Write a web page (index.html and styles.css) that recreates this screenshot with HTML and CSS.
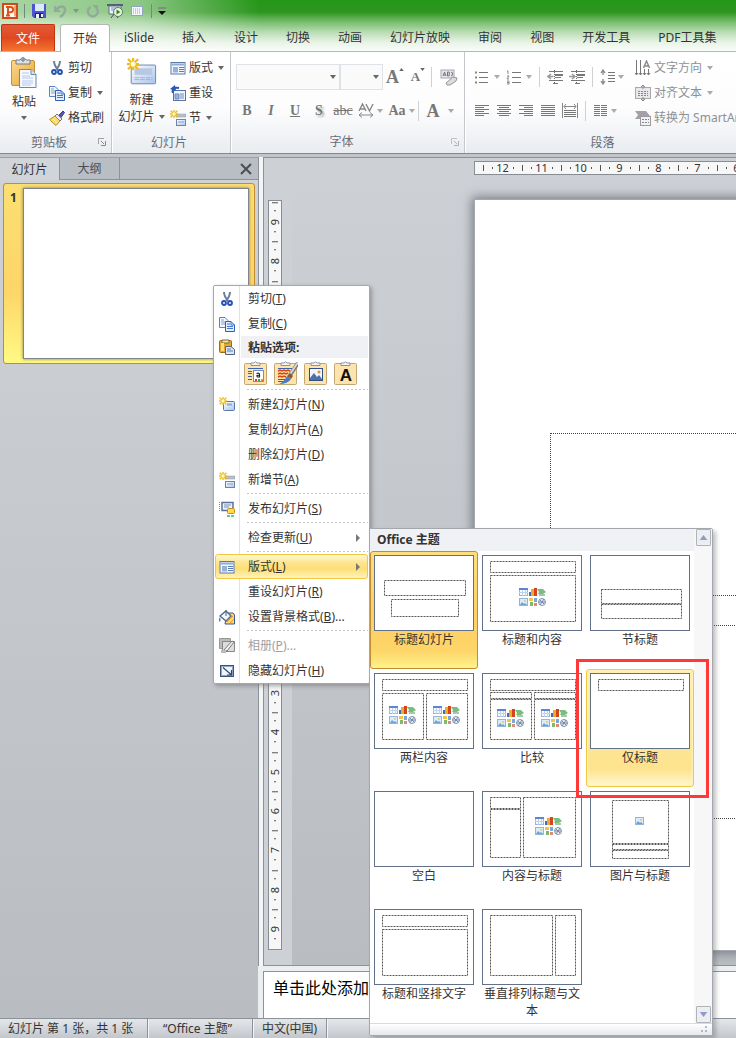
FILE: index.html
```html
<!DOCTYPE html>
<html lang="zh-CN">
<head>
<meta charset="utf-8">
<title>演示文稿</title>
<link rel="stylesheet" href="styles.css">
</head>
<body>
<svg class="sprite" aria-hidden="true">
  <defs>
    <linearGradient id="gBlue" x1="0" y1="0" x2="1" y2="1"><stop offset="0" stop-color="#fff"/><stop offset="1" stop-color="#a9c4ec"/></linearGradient>
    <linearGradient id="gPaste" x1="0" y1="0" x2="1" y2="1"><stop offset="0" stop-color="#ffd98a"/><stop offset="1" stop-color="#e0a63c"/></linearGradient>
  </defs>
  <symbol id="caret" viewBox="0 0 6 4"><path d="M0 0h6L3 4z" fill="currentColor"/></symbol>
  <symbol id="logo" viewBox="0 0 16 16"><rect x="1" y="1" width="14" height="14" fill="#fff8f2" stroke="#d0491b" stroke-width="2"/><path d="M12 3l2-1v12l-2-1z" fill="#f3a36e"/><path d="M6 13V4h2.500a2.500 2.500 0 0 1 0 5.200H6M4 12.500h4M4 4h2" fill="none" stroke="#d9541e" stroke-width="2"/></symbol>
  <symbol id="save" viewBox="0 0 16 16"><path d="M1 1h14v14H3l-2-2z" fill="#4a55cc"/><path d="M4 1h9v7H4z" fill="#dce9fa"/><path d="M4 10h8v5H4z" fill="#20275e"/><path d="M5 11h3v4H5zM10 11h2v3h-2z" fill="#eef"/></symbol>
  <symbol id="undo" viewBox="0 0 16 16"><path d="M4 6c3-4 8-3 8 1 0 3-2 5-5 7" fill="none" stroke="#93a99b" stroke-width="2.500"/><path d="M1 2v7h7z" fill="#93a99b"/></symbol>
  <symbol id="redo" viewBox="0 0 16 16"><path d="M5.500 4a5 5 0 1 0 6 1" fill="none" stroke="#93a99b" stroke-width="2.500"/><path d="M7 2h6v6z" fill="#93a99b"/></symbol>
  <symbol id="show" viewBox="0 0 16 16"><path d="M0 1h16v2H0z" fill="#4e6277"/><path d="M2 3h12v8H2z" fill="#edf4f8" stroke="#5c7185"/><path d="M4 5h6M4 7h5" stroke="#6f93c6"/><path d="M7 11l-3 4M8 11l3 4" stroke="#445"/><circle cx="11" cy="9" r="4.500" fill="#e6f5dd" stroke="#66795c"/><path d="M9.500 6.500v5l4-2.500z" fill="#2c8b28"/></symbol>
  <symbol id="dots" viewBox="0 0 16 16"><rect x="2" y="3" width="12" height="10" fill="#f4f7fc"/><rect x="2.500" y="3.500" width="11" height="9" fill="none" stroke="#2f5184" stroke-dasharray="1 1"/><path d="M4 6h8M4 8h8M4 10h8" stroke="#8ea3c8" stroke-dasharray="1 1"/></symbol>
  <symbol id="more" viewBox="0 0 8 8"><path d="M0 1h8" stroke="#fff" stroke-width="2"/><path d="M0 1h8" stroke="#111"/><path d="M0 4h8L4 8z" fill="#111"/></symbol>
  <symbol id="bigpaste" viewBox="0 0 30 32"><rect x="2.500" y="3.500" width="23" height="25" rx="1.500" fill="url(#gPaste)" stroke="#c98f31"/><path d="M7 3h4q3-5 6 0h4v4H7z" fill="#dde1e5" stroke="#717b86"/><circle cx="14" cy="3" r="1.200" fill="#fff" stroke="#56606b"/><path d="M10.500 12.500H22l5 5v13H10.500z" fill="#f5f9ff" stroke="#6d86aa"/><path d="M22 12.500v5h5" fill="#d5e3f6" stroke="#6d86aa"/><path d="M13 16h7M13 19h8M13 21h11M13 24h11M13 26h11M13 28h9" stroke="#b6c9e6"/></symbol>
  <symbol id="cut" viewBox="0 0 16 16"><path d="M5 1q0 4 4 9M11 1q0 4-4 9" fill="none" stroke="#6c7f9a" stroke-width="2"/><circle cx="5" cy="12" r="2" fill="#dbe8fb" stroke="#2650b4" stroke-width="1.800"/><circle cx="11" cy="12" r="2" fill="#dbe8fb" stroke="#2650b4" stroke-width="1.800"/></symbol>
  <symbol id="copy" viewBox="0 0 16 16"><path d="M.5 1.500H6l3 3v7H.5z" fill="#f2f7ff" stroke="#5a82bf"/><path d="M2 4h3M2 6h5M2 8h5" stroke="#7fa2d8"/><path d="M6.500 5.500H12l3.500 3.500v6.500h-9z" fill="#e4eeff" stroke="#2f5fb0"/><path d="M12 5.500V9h3.500M8 8h3M8 10.500h6M8 12.500h6" fill="none" stroke="#4377cf"/></symbol>
  <symbol id="brush" viewBox="0 0 16 16"><path d="M10 5l4-4 1.500 1.500-3.500 5z" fill="#5a55a8" stroke="#3f3c86"/><path d="M8 4l5 5-2 2-5-5z" fill="#e9ecf2" stroke="#777"/><path d="M6 6l5 5-4 4.500C4 13 2 11 .5 9.500z" fill="#ffd964" stroke="#b58a20"/><path d="M4 9l4 4" stroke="#fff3b5"/></symbol>
  <symbol id="spark" viewBox="0 0 12 12"><path d="M6 0v12M0 6h12M1 1l10 10M11 1L1 11" stroke="#eebc1c" stroke-width="2.200"/><circle cx="6" cy="6" r="2.500" fill="#fffbd0"/></symbol>
  <symbol id="bignew" viewBox="0 0 32 32"><rect x="4.500" y="7.500" width="26" height="20" rx="1" fill="url(#gBlue)" stroke="#6b83a9"/><rect x="8" y="11" width="19" height="7" fill="#b9c8e2"/><path d="M8 21h19M8 23h19" stroke="#9fb2d3" stroke-dasharray="5 1"/><use href="#spark" width="13" height="13"/></symbol>
  <symbol id="layout" viewBox="0 0 16 16"><rect x="1" y="2.500" width="14" height="11.500" fill="#f1f7ff" stroke="#5b7aa6"/><path d="M2 4.500h12" stroke="#8fabd8" stroke-width="2"/><path d="M3 7h5v5.500H3z" fill="#9ab1d6"/><path d="M9 7.500h5M9 9.500h5M9 11.500h5" stroke="#5c7eb5"/></symbol>
  <symbol id="reset" viewBox="0 0 16 16"><rect x="3.500" y="5.500" width="12" height="10" fill="#eef5ff" stroke="#5873a0"/><path d="M5 9h4v5H5zM10 9h4M10 11h4M10 13h4" stroke="#6d8bbd" fill="#9bb2d8"/><path d="M3 8q-2-6 6-5" fill="none" stroke="#2659b8" stroke-width="2"/><path d="M0 4l5-4 1 6z" fill="#2659b8"/></symbol>
  <symbol id="section" viewBox="0 0 16 16"><rect x="6" y="4" width="10" height="3" fill="#b9c0c9" stroke="#8e97a3" stroke-width=".5"/><rect x="6.500" y="9.500" width="9" height="6" fill="url(#gBlue)" stroke="#6d84a8"/><path d="M8 12h6" stroke="#8aa3ca"/><use href="#spark" width="8" height="8"/></symbol>
  <symbol id="newslide" viewBox="0 0 16 16"><rect x="4.500" y="4.500" width="11" height="9" rx="1" fill="url(#gBlue)" stroke="#5878a9"/><path d="M8 7.500h5" stroke="#8fa9d5" stroke-width="2"/><use href="#spark" width="8" height="8"/></symbol>
  <symbol id="paste" viewBox="0 0 16 16"><rect x=".5" y="1.500" width="12" height="12" rx="1" fill="#e8a72a" stroke="#9c6a10"/><path d="M3 1h7v3H3z" fill="#f8e59f" stroke="#7a6a30"/><path d="M2 4h3v8H2z" fill="#ffdf7d"/><path d="M6.500 7.500H12l3.500 3v5h-9z" fill="#dce6f4" stroke="#53657f"/><path d="M8 10h4M8 12h6" stroke="#5f7ca8"/></symbol>
  <symbol id="publish" viewBox="0 0 16 16"><path d="M.5 1v9" stroke="#7b8da8" stroke-dasharray="1 1"/><rect x="3" y="1.500" width="11" height="8" fill="#edf4ff" stroke="#5b7196" stroke-width="1.500"/><path d="M5 4h7M5 6h5" stroke="#6d8cc0"/><rect x="8.500" y="7.500" width="7" height="5" rx="1" fill="#ffdc50" stroke="#c58d16"/><path d="M8 15h8" stroke="#37c23b" stroke-width="1.500" stroke-dasharray="3 1"/></symbol>
  <symbol id="bgfmt" viewBox="0 0 16 16"><path d="M8 4h6l1.500 2v9H6z" fill="#ffd774" stroke="#39588c"/><path d="M8 13l6-6M11 14l4-4" stroke="#e69b24"/><path d="M1 7l6-5 5 5-5 5z" fill="#f2f7ff" stroke="#526a92" stroke-width="1.400"/><path d="M7 1v6" stroke="#566"/><path d="M1 8q-2 3 0 5 1-2 0-5z" fill="#3d6fcf"/></symbol>
  <symbol id="album" viewBox="0 0 16 16"><path d="M.5.500h11v10H.5z" fill="#bbb" stroke="#999"/><path d="M3.500 3.500h12v10h-12z" fill="#ddd" stroke="#888"/><path d="M5 12l8-9 2 1-7 9z" fill="#f5f5f5" stroke="#777"/><path d="M2 12h5v3H2z" fill="#bbb"/></symbol>
  <symbol id="hide" viewBox="0 0 16 16"><rect x="1.500" y="2.500" width="13" height="11" fill="#8ea5c6" stroke="#3d5479"/><rect x="3" y="4" width="10" height="8" fill="#f0f6ff"/><path d="M4 4.500l8 7M12.500 7v5H8" fill="none" stroke="#31466b" stroke-width="1.200"/></symbol>
  <symbol id="p1" viewBox="0 0 24 24"><use href="#clip" width="24" height="24"/><path d="M4 7.500h15M4 10.500h4M4 12.500h4M4 15.500h4M4 18.500h4" stroke="#3e62ae"/><rect x="9.500" y="9.500" width="10" height="11" fill="#fff" stroke="#6f90c4"/><path d="M12.500 12.500q3-1 3 1v2.500h-2q-2-2 2-2" fill="none" stroke="#222" stroke-width="1.200"/><path d="M11 19h2" stroke="#d33" stroke-width="2"/><path d="M14 19h2" stroke="#3a4" stroke-width="2"/><path d="M17 19h2" stroke="#e90" stroke-width="2"/></symbol>
  <symbol id="p2" viewBox="0 0 24 24"><use href="#clip" width="24" height="24"/><path d="M4 7.500h14M4 18.500h9M4 20.500h8" stroke="#3e62ae"/><path d="M4 10l2-1 2 1 2-1 2 1 2-1 2 1M4 13l2-1 2 1 2-1 2 1 2-1M4 16l2-1 2 1 2-1 2 1" fill="none" stroke="#d84512" stroke-width="1.400"/><path d="M24 2l-8 12" stroke="#777" stroke-width="4"/><path d="M23.500 2l-8 12" stroke="#d6d6d6" stroke-width="2"/><path d="M16 12l3 3-2 3-4-3z" fill="#8c5a32"/><path d="M13 15l4 3q-3 5-12 5 5-2 8-8z" fill="#4c7bc8"/></symbol>
  <symbol id="p3" viewBox="0 0 24 24"><use href="#clip" width="24" height="24"/><rect x="5.500" y="7.500" width="13" height="12" fill="#eff6ff" stroke="#33507f"/><circle cx="15" cy="11" r="1.500" fill="#ef8d2e"/><path d="M6 17l4-5 3 4 2-2 3 4v1H6z" fill="#4e6fa9"/></symbol>
  <symbol id="p4" viewBox="0 0 24 24"><use href="#clip" width="24" height="24"/></symbol>
  <symbol id="clip" viewBox="0 0 24 24"><rect x=".5" y="2.500" width="22" height="21" rx="1" fill="#fde3ac" stroke="#c2a775"/><path d="M7 4.500V2h3q1.500-2.500 3 0h3v2.500z" fill="#f6f7f8" stroke="#8a929b"/></symbol>
  <symbol id="eraser" viewBox="0 0 18 18"><rect x="1" y="2" width="13" height="8" fill="#e8e6ea" stroke="#a9a6ad"/><path d="M3 8l1.500-4L6 8M3.500 7h2M7.500 4v4H9q1-1 0-2 1-1 0-2zM11 4q3 1 1 2 2 1-1 2" fill="none" stroke="#777"/><path d="M6 15l7-6 4 1-1 3-6 4H7z" fill="#dfdbe1" stroke="#97939a"/></symbol>
  <symbol id="av" viewBox="0 0 16 16"><path d="M1 8l3.500-7L8 8M2.500 6h4M8 1l3.500 7L15 1" fill="none" stroke="#888" stroke-width="1.400"/><path d="M1 12h14M4 9.500L1 12l3 2.500M12 9.500l3 2.500-3 2.500" fill="none" stroke="#888"/></symbol>
  <symbol id="bul" viewBox="0 0 16 16"><path d="M5 3.500h9M5 8.500h9M5 13.500h9" stroke="#777"/><path d="M1 3.500h2M1 8.500h2M1 13.500h2" stroke="#888" stroke-width="2"/></symbol>
  <symbol id="num" viewBox="0 0 16 16"><path d="M6 3.500h9M6 8.500h9M6 13.500h9" stroke="#777"/><path d="M1 2h1v3M1 7h2L1 10h2M1 12h2v3H1M1 13.500h2" fill="none" stroke="#888"/></symbol>
  <symbol id="out" viewBox="0 0 16 16"><path d="M2 2.500h14M8 5.500h8M8 8.500h6M2 11.500h14M6 14.500h5" stroke="#777"/><path d="M8 6h8v1H8z" fill="#777"/><path d="M6.500 7.500H1M4 5L1 7.500 4 10" fill="none" stroke="#999" stroke-width="1.500"/><path d="M7.500 1v14" stroke="#666" stroke-dasharray="1 1"/></symbol>
  <symbol id="in" viewBox="0 0 16 16"><path d="M2 2.500h14M8 5.500h8M8 8.500h6M2 11.500h14M6 14.500h5" stroke="#777"/><path d="M8 6h8v1H8z" fill="#777"/><path d="M0 7.500h6M3 5l3 2.500L3 10" fill="none" stroke="#999" stroke-width="1.500"/><path d="M7.500 1v14" stroke="#666" stroke-dasharray="1 1"/></symbol>
  <symbol id="spacing" viewBox="0 0 16 16"><path d="M3 1v5M1 4l2-3 2 3M3 10v5M1 12l2 3 2-3" fill="none" stroke="#888" stroke-width="1.300"/><path d="M8 3.500h7M8 6.500h7M8 9.500h7M8 12.500h7" stroke="#777"/></symbol>
  <symbol id="al" viewBox="0 0 16 16"><path d="M1 2.500h14M1 4.500h9M1 6.500h14M1 8.500h9M1 10.500h14M1 12.500h9" stroke="#777"/></symbol>
  <symbol id="ac" viewBox="0 0 16 16"><path d="M1 2.500h14M3 4.500h10M1 6.500h14M3 8.500h10M1 10.500h14M3 12.500h10" stroke="#777"/></symbol>
  <symbol id="ar" viewBox="0 0 16 16"><path d="M1 2.500h14M6 4.500h9M1 6.500h14M6 8.500h9M1 10.500h14M6 12.500h9" stroke="#777"/></symbol>
  <symbol id="aj" viewBox="0 0 16 16"><path d="M1 2.500h14M1 4.500h14M1 6.500h14M1 8.500h14M1 10.500h14M1 12.500h14" stroke="#777"/></symbol>
  <symbol id="ad" viewBox="0 0 16 16"><path d="M.5 0v15M15.500 0v15M2 3.500h12M4 1L2 3.500 4 6M12 1l2 2.500L12 6" fill="none" stroke="#888"/><path d="M2 7.500h12M2 9.500h12M2 11.500h12M2 13.500h12" stroke="#777"/></symbol>
  <symbol id="cols" viewBox="0 0 16 16"><path d="M1 2.500h13M1 4.500h13M1 6.500h13M1 8.500h13M1 10.500h13M1 12.500h13" stroke="#777" stroke-dasharray="6 1"/></symbol>
  <symbol id="dir" viewBox="0 0 16 16"><path d="M1.500 0v15M5.500 0v15M9.500 9v6M13.500 9v6M0 13l1.500 2L3 13M4 13l1.500 2L7 13M8 13l1.500 2 1.500-2M12 13l1.500 2 1.500-2" fill="none" stroke="#777"/><path d="M8.500 8L11.500 1l3 7M9.500 6h4" fill="none" stroke="#888" stroke-width="1.400"/></symbol>
  <symbol id="valign" viewBox="0 0 16 16"><rect x=".5" y="2.500" width="15" height="11" fill="#e9e7eb" stroke="#aaa7ad"/><path d="M3 6.500h10M3 8.500h10M3 10.500h10" stroke="#888" stroke-dasharray="2 1"/><path d="M8 0v4M6 2l2-2 2 2M8 12v4M6 14l2 2 2-2" fill="none" stroke="#888"/></symbol>
  <symbol id="smart" viewBox="0 0 16 16"><path d="M0 1h11l4 5-4 3H0l3-4z" fill="#a3a1a6"/><rect x="5.500" y="6.500" width="10" height="9" fill="#f1f1f3" stroke="#9b9b9f"/><path d="M7 9.500h7M7 12.500h7" stroke="#888" stroke-dasharray="2 1"/></symbol>
  <symbol id="launch" viewBox="0 0 8 8"><path d="M.5 6V.5H6" fill="none" stroke="#9da2a9"/><path d="M3 3l3 3M7.500 3v4.500H3" fill="none" stroke="#858b93"/></symbol>
  <symbol id="pic" viewBox="0 0 9 8"><rect x=".5" y=".5" width="8" height="7" fill="#d8ecfb" stroke="#8fb7de"/><path d="M1 7l2-3 2 2 1-1 2 2z" fill="#6da0d5"/><rect x="5" y="2" width="2" height="2" fill="#f8c97c"/></symbol>
  <symbol id="six" viewBox="0 0 27 18"><rect x=".5" y=".5" width="8" height="7" fill="#f7faff" stroke="#9db3db"/><path d="M0 1h9" stroke="#5c86d0" stroke-width="2"/><path d="M3.500 2v6M6.500 2v6M0 4.500h9" stroke="#c3d2ec"/><path d="M10 4h3v4h-3z" fill="#3f6dba"/><path d="M12 1h3v7h-3z" fill="#f1a92b"/><path d="M15 0h3v8h-3z" fill="#d2451d"/><path d="M18 1h6l3 3-3 2h-5l1-2z" fill="#79bd80"/><path d="M20 6h6v2h-6z" fill="#a6c7a9"/><use href="#pic" y="10" width="9" height="8"/><path d="M10 10h4v3h-4z" fill="#f0c349"/><path d="M15 10h3v4h-3z" fill="#79a7dc"/><path d="M11 14h3v4h-3z" fill="#80b96c"/><path d="M15 15h3v3h-3z" fill="#df8a72"/><circle cx="23" cy="14" r="3.500" fill="#eef3f9" stroke="#8092ad"/><path d="M21 12l4 4M25 11l-4 6M20 14h6" stroke="#7187a8"/></symbol>
</svg>

<div class="app">
  <header class="top">
    <div class="quick">
      <svg class="i16"><use href="#logo"/></svg><i class="qsep"></i>
      <button aria-label="保存"><svg class="i16"><use href="#save"/></svg></button>
      <button class="undo" aria-label="撤消"><svg class="i16"><use href="#undo"/></svg><svg class="caret pale"><use href="#caret"/></svg></button>
      <button aria-label="重复"><svg class="i16"><use href="#redo"/></svg></button>
      <button aria-label="放映"><svg class="i16"><use href="#show"/></svg></button>
      <button aria-label="选择"><svg class="i16"><use href="#dots"/></svg></button><i class="qsep"></i>
      <button aria-label="自定义"><svg class="i8"><use href="#more"/></svg></button>
    </div>
    <nav class="tabs">
      <button class="file">文件</button><button class="active">开始</button><button>iSlide</button><button>插入</button><button>设计</button><button>切换</button><button>动画</button><button>幻灯片放映</button><button>审阅</button><button>视图</button><button>开发工具</button><button>PDF工具集</button>
    </nav>
  </header>

  <section class="ribbon">
    <div class="group g-clip">
      <div class="body">
        <button class="big"><svg class="i32"><use href="#bigpaste"/></svg><span>粘贴</span><svg class="caret"><use href="#caret"/></svg></button>
        <div class="stack">
          <button><svg class="i16"><use href="#cut"/></svg>剪切</button>
          <button><svg class="i16"><use href="#copy"/></svg>复制<svg class="caret"><use href="#caret"/></svg></button>
          <button><svg class="i16"><use href="#brush"/></svg>格式刷</button>
        </div>
      </div>
      <div class="name"><span>剪贴板</span><svg class="i8"><use href="#launch"/></svg></div>
    </div>
    <div class="group g-slide">
      <div class="body">
        <button class="big"><svg class="i32"><use href="#bignew"/></svg><span>新建</span><span class="with">幻灯片<svg class="caret"><use href="#caret"/></svg></span></button>
        <div class="stack">
          <button><svg class="i16"><use href="#layout"/></svg>版式<svg class="caret"><use href="#caret"/></svg></button>
          <button><svg class="i16"><use href="#reset"/></svg>重设</button>
          <button><svg class="i16"><use href="#section"/></svg>节<svg class="caret"><use href="#caret"/></svg></button>
        </div>
      </div>
      <div class="name"><span>幻灯片</span></div>
    </div>
    <div class="group g-font">
      <div class="body rows">
        <div class="frow first">
          <span class="combo wide"><select aria-label="字体"><option></option></select><svg class="caret"><use href="#caret"/></svg></span>
          <span class="combo"><select aria-label="字号"><option></option></select><svg class="caret"><use href="#caret"/></svg></span>
          <button class="glyph grow">A<svg class="caret up"><use href="#caret"/></svg></button>
          <button class="glyph shrink">A<svg class="caret"><use href="#caret"/></svg></button>
          <i class="vsep"></i>
          <button aria-label="清除格式"><svg class="i18"><use href="#eraser"/></svg></button>
        </div>
        <div class="frow second">
          <button class="glyph">B</button><button class="glyph it">I</button><button class="glyph un">U</button><button class="glyph sh">S</button><button class="glyph st">abc</button>
          <button class="drop" aria-label="字符间距"><svg class="i16"><use href="#av"/></svg><svg class="caret"><use href="#caret"/></svg></button>
          <button class="drop glyph">Aa<svg class="caret"><use href="#caret"/></svg></button>
          <i class="vsep"></i>
          <button class="drop glyph color">A<svg class="caret"><use href="#caret"/></svg></button>
        </div>
      </div>
      <div class="name dim"><span>字体</span><svg class="i8"><use href="#launch"/></svg></div>
    </div>
    <div class="group g-para">
      <div class="body">
        <div class="rows">
          <div class="prow">
            <button class="drop" aria-label="项目符号"><svg class="i16"><use href="#bul"/></svg><svg class="caret"><use href="#caret"/></svg></button>
            <button class="drop" aria-label="编号"><svg class="i16"><use href="#num"/></svg><svg class="caret"><use href="#caret"/></svg></button>
            <i class="vsep"></i>
            <button aria-label="减少缩进"><svg class="i16"><use href="#out"/></svg></button>
            <button aria-label="增加缩进"><svg class="i16"><use href="#in"/></svg></button>
            <i class="vsep"></i>
            <button class="drop tight" aria-label="行距"><svg class="i16"><use href="#spacing"/></svg><svg class="caret"><use href="#caret"/></svg></button>
          </div>
          <div class="prow">
            <button aria-label="左对齐"><svg class="i16"><use href="#al"/></svg></button>
            <button aria-label="居中"><svg class="i16"><use href="#ac"/></svg></button>
            <button aria-label="右对齐"><svg class="i16"><use href="#ar"/></svg></button>
            <button aria-label="两端对齐"><svg class="i16"><use href="#aj"/></svg></button>
            <button aria-label="分散对齐"><svg class="i16"><use href="#ad"/></svg></button>
            <i class="vsep"></i>
            <button class="drop tight" aria-label="分栏"><svg class="i16"><use href="#cols"/></svg><svg class="caret"><use href="#caret"/></svg></button>
          </div>
        </div>
        <div class="stack dis">
          <button><svg class="i16"><use href="#dir"/></svg>文字方向<svg class="caret"><use href="#caret"/></svg></button>
          <button><svg class="i16"><use href="#valign"/></svg>对齐文本<svg class="caret"><use href="#caret"/></svg></button>
          <button><svg class="i16"><use href="#smart"/></svg>转换为 SmartArt</button>
        </div>
      </div>
      <div class="name"><span>段落</span></div>
    </div>
  </section>

  <main class="work">
    <aside class="side">
      <div class="sidetabs"><button class="on">幻灯片</button><button>大纲</button><button class="close" aria-label="关闭"><svg class="i12" viewBox="0 0 12 12"><path d="M1 1l10 10M11 1L1 11" stroke="#4a4e53" stroke-width="2"/></svg></button></div>
      <div class="card"><b>1</b><div class="mini"></div></div>
    </aside>
    <section class="edit">
      <div class="canvas">
        <div class="hrule"><span>12</span><span>11</span><span>10</span><span>9</span><span>8</span><span>7</span><span>6</span></div>
        <div class="vwrap"><div class="vrule"><span>9</span><span>8</span><span>7</span><span>6</span><span>5</span><span>4</span><span>3</span><span>2</span><span>1</span><span>0</span><span>1</span><span>2</span><span>3</span><span>4</span><span>5</span><span>6</span><span>7</span><span>8</span><span>9</span></div></div>
        <div class="stage"><div class="slide"><div class="ph title">单击此处添加标题</div><div class="ph sub"></div></div></div>
      </div>
      <textarea class="notes" aria-label="备注">单击此处添加</textarea>
    </section>
  </main>

  <footer class="status"><span>幻灯片 第 1 张，共 1 张</span><span>“Office 主题”</span><span>中文(中国)</span></footer>

  <div class="menu" role="menu">
    <button><svg class="i16"><use href="#cut"/></svg><span>剪切(<u>T</u>)</span></button>
    <button><svg class="i16"><use href="#copy"/></svg><span>复制(<u>C</u>)</span></button>
    <div class="mhead"><svg class="i16"><use href="#paste"/></svg><b>粘贴选项:</b></div>
    <div class="popts">
      <button aria-label="使用目标主题"><svg class="i24"><use href="#p1"/></svg></button><button aria-label="保留源格式"><svg class="i24"><use href="#p2"/></svg></button><button aria-label="图片"><svg class="i24"><use href="#p3"/></svg></button><button aria-label="只保留文本"><svg class="i24" viewBox="0 0 24 24"><use href="#p4" width="24" height="24"/><text class="keep" x="12" y="20">A</text></svg></button>
    </div>
    <hr>
    <button><svg class="i16"><use href="#newslide"/></svg><span>新建幻灯片(<u>N</u>)</span></button>
    <button><i class="i16"></i><span>复制幻灯片(<u>A</u>)</span></button>
    <button><i class="i16"></i><span>删除幻灯片(<u>D</u>)</span></button>
    <button><svg class="i16"><use href="#section"/></svg><span>新增节(<u>A</u>)</span></button>
    <hr>
    <button><svg class="i16"><use href="#publish"/></svg><span>发布幻灯片(<u>S</u>)</span></button>
    <hr>
    <button><i class="i16"></i><span>检查更新(<u>U</u>)</span><svg class="arrow" viewBox="0 0 4 8"><path d="M0 0l4 4-4 4z"/></svg></button>
    <hr>
    <button class="hot"><svg class="i16"><use href="#layout"/></svg><span>版式(<u>L</u>)</span><svg class="arrow" viewBox="0 0 4 8"><path d="M0 0l4 4-4 4z"/></svg></button>
    <button><i class="i16"></i><span>重设幻灯片(<u>R</u>)</span></button>
    <button><svg class="i16"><use href="#bgfmt"/></svg><span>设置背景格式(<u>B</u>)...</span></button>
    <hr>
    <button disabled><svg class="i16"><use href="#album"/></svg><span>相册(<u>P</u>)...</span></button>
    <button><svg class="i16"><use href="#hide"/></svg><span>隐藏幻灯片(<u>H</u>)</span></button>
  </div>

  <div class="gallery">
    <div class="gmain">
      <div class="glist">
        <h2>Office 主题</h2>
        <div class="grid">
          <button class="sel"><svg class="thumb"><path d="M10.500 25.500h81v15h-81zM17.500 44.500h67v17h-67z"/></svg>标题幻灯片</button>
          <button><svg class="thumb"><path d="M8.500 6.500h85v11h-85zM8.500 20.500h85v46h-85z"/><use href="#six" x="36" y="32" width="27" height="18"/></svg>标题和内容</button>
          <button><svg class="thumb"><path d="M11.500 34.500h80v14h-80zM11.500 49.500h80v14h-80z"/></svg>节标题</button>
          <button><svg class="thumb"><path d="M8.500 6.500h85v11h-85zM8.500 20.500h41v46h-41zM52.500 20.500h41v46h-41z"/><use href="#six" x="14" y="32" width="27" height="18"/><use href="#six" x="58" y="32" width="27" height="18"/></svg>两栏内容</button>
          <button><svg class="thumb"><path d="M8.500 6.500h85v11h-85zM8.500 19.500h41v6h-41zM52.500 19.500h41v6h-41zM8.500 26.500h41v40h-41zM52.500 26.500h41v40h-41z"/><use href="#six" x="14" y="35" width="27" height="18"/><use href="#six" x="58" y="35" width="27" height="18"/></svg>比较</button>
          <button class="hov"><svg class="thumb"><path d="M8.500 6.500h85v11h-85z"/></svg>仅标题</button>
          <button><svg class="thumb"></svg>空白</button>
          <button><svg class="thumb"><path d="M8.500 6.500h30v11h-30zM8.500 18.500h30v48h-30zM41.500 6.500h52v60h-52z"/><use href="#six" x="52" y="25" width="27" height="18"/></svg>内容与标题</button>
          <button><svg class="thumb"><path d="M22.500 9.500h56v43h-56zM22.500 53.500h56v5h-56zM22.500 59.500h56v8h-56z"/><use href="#pic" x="44" y="25" width="9" height="8"/></svg>图片与标题</button>
          <button><svg class="thumb"><path d="M8.500 6.500h85v11h-85zM8.500 20.500h85v46h-85z"/></svg>标题和竖排文字</button>
          <button><svg class="thumb"><path d="M8.500 6.500h62v60h-62zM73.500 6.500h20v60h-20z"/></svg>垂直排列标题与文本</button>
        </div>
      </div>
      <div class="scroll"><button aria-label="向上"><svg class="tri up"><use href="#caret"/></svg></button><button aria-label="向下"><svg class="tri"><use href="#caret"/></svg></button></div>
    </div>
    <div class="grip"><svg class="i8" viewBox="0 0 8 8"><path d="M5 1h2M5 5h2M1 5h2" stroke="#b3b8c0" stroke-width="2"/></svg></div>
    <div class="redbox"></div>
  </div>
</div>
</body>
</html>
```
FILE: styles.css
```css
* { box-sizing: border-box; }
body { margin: 0; font: 12px/17px "Noto Sans", "Noto Sans CJK SC", sans-serif; color: #333; }
button { display: flex; align-items: center; border: 0; padding: 0; margin: 0; background: none; font: inherit; color: inherit; white-space: nowrap; }
svg { display: block; flex: none; }
.sprite { position: absolute; width: 0; height: 0; }
.i8 { width: 8px; height: 8px; }
.i12 { width: 12px; height: 12px; }
.i16 { width: 16px; height: 16px; flex: none; }
.i18 { width: 18px; height: 18px; }
.i24 { width: 24px; height: 24px; }
.i32 { width: 30px; height: 32px; }
.caret { width: 6px; height: 4px; color: #666; }
.up { transform: rotate(180deg); }
.app { position: relative; display: flex; flex-direction: column; height: 100vh; min-height: 1038px; overflow: hidden; }

/* title bar and ribbon tabs */
.top { background: linear-gradient(90deg, #fff9 0, #fff7 140px, #fff0 260px), linear-gradient(#249718 0, #2d951f 12px, #77bd6e 22px, #b8dcb3 32px, #e7f3e5 42px, #fafdfa 51px); border-bottom: 1px solid #b3b8b5; }
.quick { display: flex; align-items: center; gap: 6px; height: 24px; padding: 0 2px 2px; }
.qsep { width: 1px; height: 14px; background: #6e8d74; }
.undo { gap: 4px; }
.pale { color: #7e9885; }
.tabs { display: flex; height: 27px; }
.tabs button { padding: 0 14px; color: #333; }
.tabs .file { width: 54px; margin: 0 5px 0 1px; border: 1px solid #bf3411; border-bottom: 0; border-radius: 2px 2px 0 0; background: linear-gradient(#e05a3a, #e0481f 50%, #f5742f); color: #fff; }
.tabs .active { width: 50px; padding: 0 12px; height: 28px; border: 1px solid #b3b8b5; border-bottom: 0; border-radius: 3px 3px 0 0; background: #fff; }
.ribbon { display: flex; height: 102px; background: linear-gradient(#fff 0, #fdfdfe 55%, #e9ecf0); border-bottom: 1px solid #85898f; overflow: hidden; }
.group { display: flex; flex-direction: column; flex: none; padding-top: 3px; border-right: 1px solid #c4c8cd; box-shadow: 1px 0 #fff; margin-right: 1px; }
.g-clip { width: 112px; }
.g-slide { width: 118px; }
.g-font { width: 233px; }
.g-para { flex: 1 0 274px; margin: 0; border: 0; }
.body { display: flex; height: 75px; }
.rows { display: flex; flex-direction: column; padding-top: 5px; }
.name { display: flex; align-items: center; height: 24px; padding: 1px 5px 0 0; color: #666c75; }
.name span { flex: 1; text-align: center; }
.dim .i8 { opacity: .6; }
.big { flex-direction: column; width: 48px; padding-top: 2px; }
.g-clip .big span { margin: 4px 0 6px; }
.g-slide .big { width: 57px; }
.g-slide .big span { margin-top: 2px; }
.g-slide .big .with { margin-top: 0; }
.with { display: flex; align-items: center; gap: 4px; }
.stack button { height: 25px; gap: 3px; }
.stack .caret { margin-left: 2px; }
.g-clip .stack { padding-left: 1px; }
.dis { color: #8f9094; }
.dis .caret, .frow .drop .caret, .prow .caret { color: #aaa; }
.frow { display: flex; align-items: center; height: 34px; padding-left: 4px; }
.second { padding-left: 3px; }
.combo { position: relative; width: 43px; height: 26px; }
.combo.wide { width: 104px; }
.combo select { appearance: none; width: 100%; height: 100%; border: 1px solid #dfe2e6; background: #fafafb; }
.combo .caret { position: absolute; right: 4px; top: 11px; }
.glyph { justify-content: center; width: 24px; font: bold 14px/18px "Liberation Serif", serif; color: #777; }
.grow { width: 24px; font-size: 18px; align-items: center; }
.shrink { width: 22px; font-size: 13px; }
.grow .caret, .shrink .caret { width: 5px; height: 3px; align-self: flex-start; }
.it { font-style: italic; }
.un { text-decoration: underline; }
.sh { text-shadow: 2px 2px 2px #aaa; }
.st { font-weight: normal; text-decoration: line-through; }
.vsep { width: 1px; height: 20px; margin: 0 1px; background: #cfd1d4; }
.first .vsep { margin: 0 8px 0 2px; }
.drop { gap: 4px; }
.frow .drop { gap: 3px; width: 31px; justify-content: center; }
.frow .color { width: 40px; font-size: 18px; gap: 8px; }
.prow { display: flex; align-items: center; gap: 6px; width: 169px; height: 34px; padding-left: 8px; }
.prow .tight { gap: 2px; }

/* slide list */
.work { display: flex; flex: 1; min-height: 0; padding-top: 3px; background: #c2c6cb; }
.side { width: 259px; flex: none; border-right: 1px solid #8d9299; background: linear-gradient(#cfd2d7, #b9bcc1); }
.sidetabs { display: flex; height: 23px; background: #b9bec4; border-bottom: 1px solid #8d9299; border-top: 1px solid #9ca1a7; }
.sidetabs button { width: 60px; justify-content: center; border-right: 1px solid #8d9299; color: #4a4e53; }
.sidetabs .on { height: 22px; background: #d1d4d9; color: #333; }
.sidetabs .close { width: 24px; margin-left: auto; border: 0; }
.card { display: flex; width: 252px; height: 181px; margin: 3px 3px; padding: 4px 5px 4px 6px; border: 1px solid #c28d31; border-radius: 3px; background: linear-gradient(#fbdf72, #fdd56a 60%, #fffa84); }
.card b { width: 13px; font: bold 12px/19px "Noto Sans", sans-serif; }
.mini { flex: 1; background: #fff; border: 1px solid #7f858e; box-shadow: 0 0 3px #8b7a44; }

/* slide editor */
.edit { display: flex; flex-direction: column; flex: 1; min-width: 0; margin-left: 4px; box-shadow: -4px 0 #f3f5f7; }
.canvas { display: grid; grid-template-columns: 28px 1fr; grid-template-rows: 41px 1fr; flex: 1; min-height: 0; overflow: hidden; border: 1px solid #8d9299; border-right: 0; background: linear-gradient(#cdd0d5, #b9bcc1); }
.hrule { grid-column: 2; display: flex; height: 14px; margin: 3px 0 0 182px; padding-left: 8px; border: 1px solid #878d95; border-right: 0; background: #f7f7f7; overflow: hidden; font: 11px/12px "Noto Sans", sans-serif; }
.hrule span { flex: none; width: 39px; text-align: center; background: linear-gradient(#555, #555) 0 3px / 1px 6px no-repeat, linear-gradient(#555, #555) 9px 5px / 1px 2px no-repeat, linear-gradient(#555, #555) 30px 5px / 1px 2px no-repeat; }
.vwrap { background: #cdd0d5; padding: 1px 0 0 4px; }
.vrule { display: flex; flex-direction: column; width: 14px; height: 750px; padding: 1px 0; border: 1px solid #878d95; background: #f7f7f7; font: 11px/12px "Noto Sans", sans-serif; }
.vrule span { flex: 1; writing-mode: vertical-rl; transform: rotate(180deg); text-align: center; background: linear-gradient(#555, #555) 3px 100% / 6px 1px no-repeat, linear-gradient(#555, #555) 5px 9px / 2px 1px no-repeat, linear-gradient(#555, #555) 5px 30px / 2px 1px no-repeat; }
.stage { min-width: 0; padding-left: 182px; }
.slide { width: 1000px; height: 752px; padding: 233px 75px 0; background: #fff; border: 1px solid #a4a8ae; box-shadow: 0 0 10px 2px #777c84; }
.ph { border: 1px dotted #444; }
.title { height: 163px; font: 60px/160px "Noto Sans CJK SC", sans-serif; text-align: center; color: #000; }
.sub { height: 194px; margin: 29px 75px 0; }
.notes { display: block; height: 47px; margin: 5px 0 0; padding: 4px 9px; border: 1px solid #8d9299; border-width: 1px 0 0 1px; border-radius: 0; outline: 5px solid #eceff2; resize: none; font: 16px/22px "Noto Sans CJK SC", sans-serif; color: #000; overflow: hidden; }
.status { position: relative; display: flex; height: 20px; border-top: 1px solid #8d9299; background: linear-gradient(#e4e7ea, #c3c7cc); }
.status span { padding: 1px 9px; border-right: 1px solid #8d9299; box-shadow: 1px 0 #f2f4f6; }
.status span:first-child { min-width: 148px; padding-left: 8px; }
.status span:nth-child(2) { min-width: 105px; padding: 1px 15px; }

/* context menu */
.menu { position: absolute; left: 213px; top: 285px; width: 157px; padding-right: 1px; border: 1px solid #a3a7ae; border-radius: 2px; background: linear-gradient(90deg, #fff 25px, #e0e2e5 25px, #e0e2e5 26px, #fff 26px); box-shadow: 2px 2px 4px #6668; }
.menu > button { width: 100%; height: 25px; gap: 13px; padding: 0 8px 0 5px; }
.menu > button:disabled { color: #a0a0a0; }
.arrow { width: 4px; height: 8px; margin-left: auto; fill: #777; }
.menu > .hot { width: 153px; margin-left: 1px; padding: 0 7px 0 3px; border: 1px solid #f0c843; border-radius: 3px; background: linear-gradient(#fff7d4, #fde58c 35%, #fddf78 60%, #fff3bd); }
.mhead { display: flex; align-items: center; height: 22px; gap: 13px; padding-left: 5px; background: linear-gradient(90deg, #fff0 27px, #eff1f5 27px); }
.popts { display: flex; gap: 6px; align-items: flex-start; height: 30px; padding: 3px 0 0 30px; }
.keep { font: bold 17px "Liberation Sans", sans-serif; text-anchor: middle; fill: #111; }
.menu hr { height: 4px; margin: 0 0 0 33px; border: 0; background: repeating-linear-gradient(90deg, #c3c5c8 0 2px, #fff 2px 4px) 0 1px / 100% 1px no-repeat; }

/* layout gallery */
.gallery { position: absolute; left: 369px; top: 528px; width: 344px; border: 1px solid #a3a7ae; border-radius: 2px; background: #fff; box-shadow: 3px 3px 4px #6666; }
.gmain { display: flex; }
.glist { width: 324px; }
.gallery h2 { height: 22px; margin: 0; padding: 2px 7px; background: #f0f1f5; font: bold 12px/18px "Noto Sans", "Noto Sans CJK SC", sans-serif; }
.grid { display: grid; grid-template-columns: repeat(3, 108px); grid-auto-rows: 118px; }
.grid button { flex-direction: column; padding: 3px 3px 0; border: 1px solid #fff0; border-radius: 3px; white-space: normal; text-align: center; }
.thumb { width: 100px; height: 76px; border: 1px solid #63708a; background: #fff; }
.thumb path { fill: none; stroke: #555; stroke-dasharray: 2 1; transform: translate(-1px, -1px); }
.grid .sel { border-color: #c28d31; background: linear-gradient(#fbdf80, #fdd064 50%, #fdd569 85%, #fff28a); }
.grid .hov { border-color: #f0c843; box-shadow: inset 0 0 2px 1px #fff3c0; background: linear-gradient(#fdeeb0, #fde38d 85%, #fff7cf); }
.scroll { display: flex; flex-direction: column; justify-content: space-between; align-items: center; flex: 1; background: #f7f7f8; }
.scroll button { justify-content: center; width: 15px; height: 17px; border: 1px solid #b0b4ba; border-radius: 1px; background: #eceef1; }
.tri { width: 9px; height: 5px; color: #8d9cc8; }
.grip { display: flex; justify-content: flex-end; align-items: center; height: 12px; padding-right: 4px; border-top: 1px solid #d8dbe0; background: linear-gradient(#fff, #e6e8ec); }
.redbox { position: absolute; left: 206px; top: 130px; width: 133px; height: 139px; border: 3px solid #ff3838; pointer-events: none; }
```
